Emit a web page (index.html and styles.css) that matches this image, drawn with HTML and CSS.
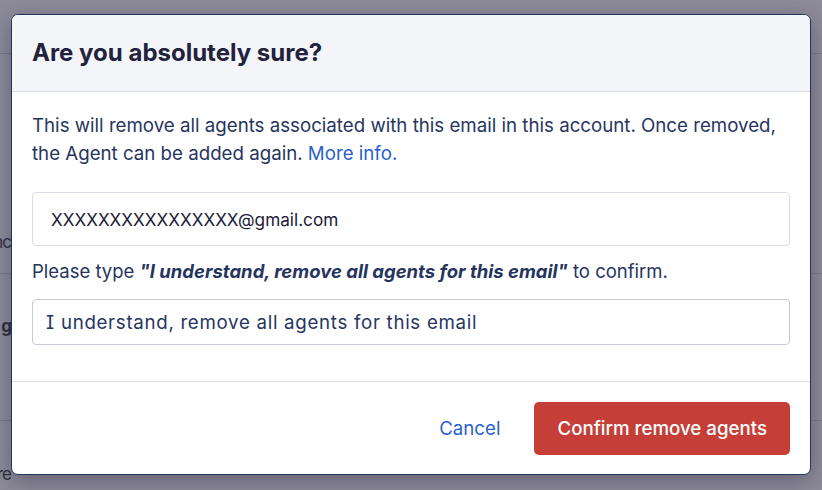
FILE: index.html
```html
<!DOCTYPE html>
<html>
<head>
<meta charset="utf-8">
<link rel="stylesheet" href="styles.css">
</head>
<body>
<div class="page">
  <div class="row row-top"></div>
  <div class="row row-a"><span class="frag">nc</span></div>
  <div class="row row-b"><span class="frag bold">g</span></div>
  <div class="row row-c"><span class="frag">re</span></div>
</div>
<div class="modal">
  <div class="modal-header">
    <h2 class="title">Are you absolutely sure?</h2>
  </div>
  <div class="modal-body">
    <p class="desc">This will remove all agents associated with this email in this account. Once removed, the Agent can be added again. <a class="link" href="#">More info.</a></p>
    <div class="field field-email">XXXXXXXXXXXXXXXX@gmail.com</div>
    <p class="hint">Please type <strong class="quote">"I understand, remove all agents for this email"</strong> to confirm.</p>
    <div class="field field-confirm">I understand, remove all agents for this email</div>
  </div>
  <div class="modal-footer">
    <a class="cancel" href="#">Cancel</a>
    <button class="danger">Confirm remove agents</button>
  </div>
</div>
</body>
</html>
```
FILE: styles.css
```css
* { box-sizing: border-box; }
html, body { margin: 0; padding: 0; }
body {
  width: 822px;
  height: 490px;
  overflow: hidden;
  background: #8e8b9a;
  font-family: Inter, "Noto Sans", sans-serif;
  position: relative;
}
.page { display: flex; flex-direction: column; }
.row { border-bottom: 1px solid #7c798a; display: flex; align-items: center; }
.row-top { height: 54px; }
.row-a { height: 220px; align-items: flex-end; padding-bottom: 21px; }
.row-b { height: 147px; align-items: flex-start; padding-top: 42px; }
.row-c { height: 69px; border-bottom: none; align-items: flex-end; padding-bottom: 6px; }
.frag {
  width: 11px;
  overflow: hidden;
  direction: rtl;
  white-space: nowrap;
  color: #2f3042;
  font-size: 17px;
  letter-spacing: -1px;
  display: block;
}
.frag.bold { font-weight: 700; }

.modal {
  position: absolute;
  left: 11px;
  top: 14px;
  width: 800px;
  background: #fff;
  border: 1px solid #26355f;
  border-radius: 7px;
  overflow: hidden;
  box-shadow: 0 6px 24px rgba(20, 18, 40, 0.35);
}
.modal-header {
  background: #f4f5f9;
  border-bottom: 1px solid #dcdfe6;
  padding: 23px 20px 24px;
}
.title {
  margin: 0;
  font-size: 24px;
  line-height: 29px;
  font-weight: 700;
  color: #22223c;
}
.modal-body {
  padding: 20px 20px 36px;
  color: #26355f;
}
.desc {
  margin: 0;
  font-size: 18.7px;
  line-height: 28px;
}
.link { color: #2a5fce; text-decoration: none; }
.field {
  border: 1px solid #d6dbe5;
  border-radius: 4px;
  background: #fff;
  color: #1c2038;
}
.field-email {
  margin-top: 24px;
  height: 54px;
  padding: 0 18px;
  display: flex;
  align-items: center;
  font-size: 17.2px;
}
.hint {
  margin: 12px 0 0;
  font-size: 18.5px;
  line-height: 26px;
}
.quote { font-style: italic; font-weight: 700; }
.field-confirm {
  margin-top: 15px;
  height: 46px;
  padding: 0 13px;
  display: flex;
  align-items: center;
  border-color: #c6cad3;
  color: #26355f;
  font-size: 18.7px;
  font-feature-settings: "cv08" 1;
  letter-spacing: 0.7px;
}
.modal-footer {
  border-top: 1px solid #dcdfe6;
  padding: 20px 20px 19px;
  display: flex;
  justify-content: flex-end;
  align-items: center;
  gap: 34px;
}
.cancel {
  color: #2a5fce;
  font-size: 18.7px;
  text-decoration: none;
}
.danger {
  height: 53px;
  padding: 0 23px;
  background: #c53f38;
  color: #fff;
  border: none;
  border-radius: 5px;
  font-family: Inter, "Noto Sans", sans-serif;
  font-size: 18.7px;
  font-weight: 500;
}
```
